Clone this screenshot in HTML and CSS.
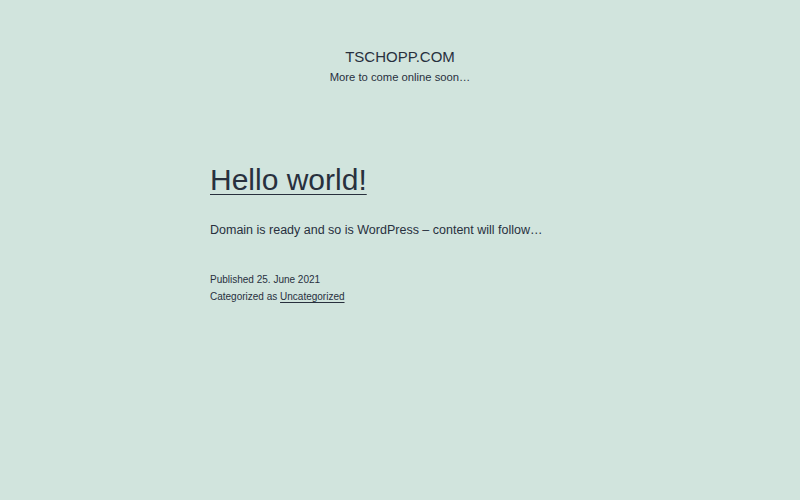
FILE: index.html
```html
<!DOCTYPE html>
<html lang="en">
<head>
<meta charset="utf-8">
<title>TSCHOPP.COM</title>
<link rel="stylesheet" href="styles.css">
</head>
<body>
<header class="site-header">
  <p class="site-title">TSCHOPP.COM</p>
  <p class="site-description">More to come online soon…</p>
</header>
<main class="site-main">
  <article class="post">
    <h1 class="entry-title"><a href="#">Hello world!</a></h1>
    <div class="entry-content">
      <p>Domain is ready and so is WordPress – content will follow…</p>
    </div>
    <footer class="entry-footer">
      <p class="meta">Published 25. June 2021</p>
      <p class="meta">Categorized as <a href="#">Uncategorized</a></p>
    </footer>
  </article>
</main>
</body>
</html>
```
FILE: styles.css
```css
html, body {
  margin: 0;
  padding: 0;
  background: #d1e4dd;
  color: #28303d;
  font-family: "Liberation Sans", Arial, sans-serif;
}
body {
  height: 500px;
  overflow: hidden;
}
p { margin: 0; }
a { color: #28303d; }
.site-header {
  padding-top: 48px;
  text-align: center;
}
.site-title {
  font-size: 15px;
  line-height: 18px;
}
.site-description {
  margin-top: 1px;
  font-size: 11.25px;
  line-height: 20px;
}
.site-main {
  width: 380px;
  margin: 0 auto;
  padding-top: 73px;
}
.entry-title {
  margin: 0;
  font-size: 30px;
  font-weight: normal;
  line-height: 40px;
}
.entry-title a {
  text-decoration-thickness: 1px;
  text-underline-offset: 4px;
}
.entry-content {
  margin-top: 20px;
  font-size: 12.5px;
  line-height: 20px;
}
.entry-footer {
  margin-top: 31px;
}
.meta {
  font-size: 10px;
  line-height: 17px;
}
.meta a {
  text-decoration-thickness: 1px;
  text-underline-offset: 2px;
}
```
